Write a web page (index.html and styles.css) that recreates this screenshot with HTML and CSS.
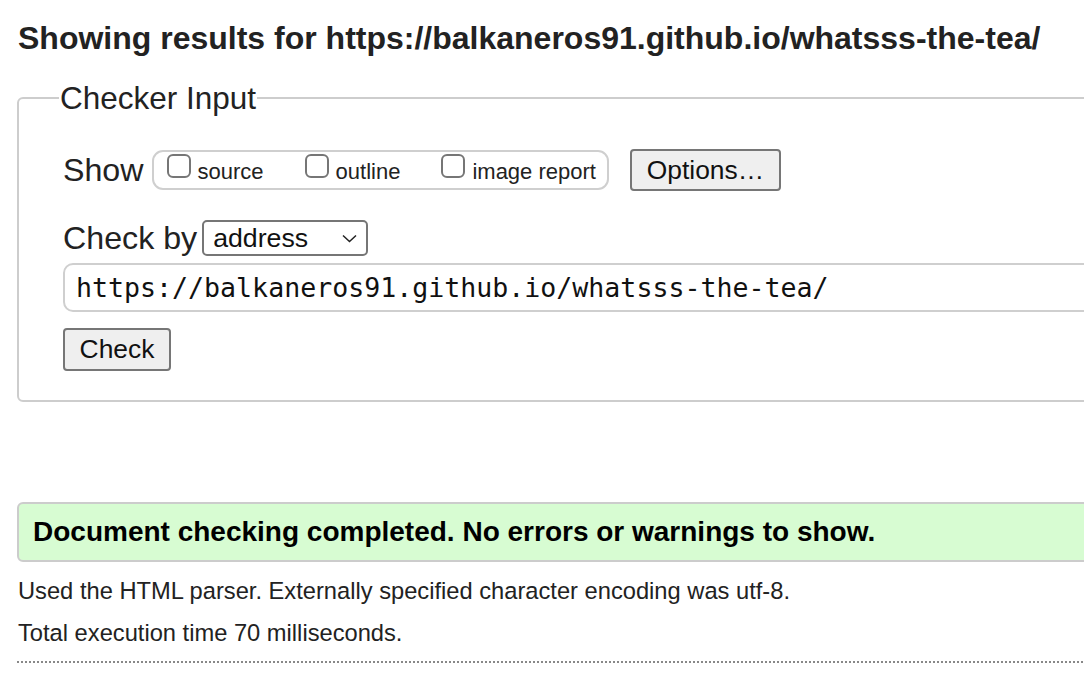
FILE: index.html
```html
<!DOCTYPE html>
<html>
<head>
<meta charset="utf-8">
<link rel="stylesheet" href="styles.css">
</head>
<body>
<div class="page">
  <h2 class="title">Showing results for https://balkaneros91.github.io/whatsss-the-tea/</h2>
  <fieldset class="checker">
    <legend class="legend">Checker Input</legend>
    <div class="row show-row">
      <span class="label">Show</span>
      <div class="opts">
        <label class="opt"><span class="box"></span>source</label>
        <label class="opt"><span class="box"></span>outline</label>
        <label class="opt"><span class="box"></span>image report</label>
      </div>
      <span class="btn btn-options">Options…</span>
    </div>
    <div class="row by-row">
      <span class="label">Check by</span>
      <span class="select">address
        <svg class="chev" width="15" height="9" viewBox="0 0 15 9"><path d="M1 1.5 L7.5 7.5 L14 1.5" fill="none" stroke="#222" stroke-width="1.5"/></svg>
      </span>
    </div>
    <div class="url">https://balkaneros91.github.io/whatsss-the-tea/</div>
    <span class="btn btn-check">Check</span>
  </fieldset>
  <div class="success">Document checking completed. No errors or warnings to show.</div>
  <p class="info first">Used the HTML parser. Externally specified character encoding was utf-8.</p>
  <p class="info">Total execution time 70 milliseconds.</p>
  <div class="dots"></div>
</div>
</body>
</html>
```

FILE: styles.css
```css
html, body {
  margin: 0;
  padding: 0;
  background: #fff;
  overflow: hidden;
}
body {
  font-family: "Liberation Sans", Arial, sans-serif;
  color: #222;
}
.page {
  width: 1200px;
  padding-left: 17px;
}
.title {
  margin: 0;
  padding-top: 19px;
  font-size: 32px;
  line-height: 38px;
  font-weight: bold;
  color: #222;
  padding-left: 1px;
  white-space: nowrap;
}
.checker {
  margin: 22px 0 0 0;
  padding: 32px 0 29px 44px;
  border: 2px solid #cdcdcd;
  border-radius: 6px;
  width: 1150px;
}
.legend {
  font-size: 31.5px;
  line-height: 38px;
  padding: 0 1px;
  margin-left: -4px;
  color: #222;
}
.row {
  display: flex;
  align-items: center;
}
.label {
  font-size: 32.2px;
  color: #222;
}
.show-row {
  height: 42px;
}
.opts {
  display: flex;
  align-items: center;
  margin-left: 8px;
  border: 2px solid #cfcfcf;
  border-radius: 11px;
  height: 40px;
  padding: 0 11px 0 13px;
  gap: 41px;
  box-sizing: border-box;
}
.opt {
  display: block;
  font-size: 22px;
  line-height: 22px;
  padding-bottom: 4px;
  color: #222;
  white-space: nowrap;
}
.box {
  display: inline-block;
  vertical-align: baseline;
  width: 24px;
  height: 24px;
  box-sizing: border-box;
  border: 2px solid #767676;
  border-radius: 6px;
  margin-right: 7px;
  margin-bottom: 1px;
}
.btn {
  display: inline-flex;
  align-items: center;
  justify-content: center;
  background: #efefef;
  border: 2px solid #767676;
  border-radius: 4px;
  box-sizing: border-box;
  font-size: 26.4px;
  color: #111;
}
.btn-options {
  margin-left: 21px;
  width: 151px;
  height: 42px;
}
.by-row {
  margin-top: 29px;
  height: 36px;
}
.select {
  margin-left: 5px;
  width: 166px;
  height: 36px;
  border: 2px solid #767676;
  border-radius: 5px;
  box-sizing: border-box;
  display: flex;
  align-items: center;
  justify-content: space-between;
  padding: 0 9px 0 9px;
  font-size: 26.7px;
  color: #111;
}
.chev {
  display: block;
}
.url {
  margin-top: 7px;
  height: 49px;
  box-sizing: border-box;
  border: 2px solid #cfcfcf;
  border-radius: 10px;
  font-family: "DejaVu Sans Mono", "Liberation Mono", monospace;
  font-size: 26.6px;
  line-height: 45px;
  padding-left: 11px;
  color: #111;
}
.btn-check {
  margin-top: 16px;
  width: 108px;
  height: 43px;
}
.success {
  margin-top: 100px;
  width: 1150px;
  height: 60px;
  box-sizing: border-box;
  background: #d7fcd2;
  border: 2px solid #cccccc;
  border-radius: 6px;
  font-weight: bold;
  font-size: 28px;
  line-height: 56px;
  padding-left: 14px;
  color: #000;
  white-space: nowrap;
}
.info {
  margin: 0;
  font-size: 23.7px;
  line-height: 42px;
  padding-left: 1px;
  color: #222;
  white-space: nowrap;
}
.info.first {
  margin-top: 8px;
}
.dots {
  margin-top: 7px;
  border-top: 2px dotted #888;
  width: 1150px;
}
```
